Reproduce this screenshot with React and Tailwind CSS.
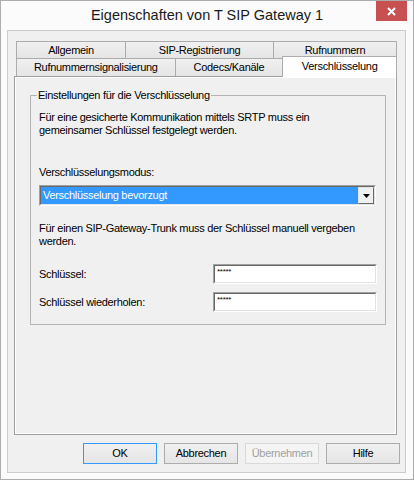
const ui = { fontFamily: '"Liberation Sans", Arial, sans-serif' };

function Tab({ label, width, active }) {
  if (active) {
    return (
      <div
        className={`relative z-10 -mt-[2px] -mb-px flex items-center justify-center border border-b-0 border-[#acacac] bg-white ${width}`}
      >
        <span className="pb-[1px]">{label}</span>
      </div>
    );
  }
  return (
    <div
      className={`-ml-px flex items-center justify-center border border-b-0 border-[#acacac] bg-gradient-to-b from-[#f0f0f0] to-[#e5e5e5] first:ml-0 ${width}`}
    >
      {label}
    </div>
  );
}

// classic sunken 3D edge used by edit boxes and the combo
function Sunken({ className, children }) {
  return (
    <div className={`border border-t-[#a0a0a0] border-l-[#a0a0a0] border-r-white border-b-white ${className}`}>
      <div className="flex h-full border border-t-[#696969] border-l-[#696969] border-r-[#e3e3e3] border-b-[#e3e3e3] bg-white">
        {children}
      </div>
    </div>
  );
}

function Button({ children, primary, disabled }) {
  let cls = 'border-[#acacac] bg-gradient-to-b from-[#f0f0f0] to-[#e5e5e5] text-black';
  if (primary) cls = 'border-[#3399ff] bg-gradient-to-b from-[#f0f0f0] to-[#e5e5e5] text-black';
  if (disabled) cls = 'border-[#d9d9d9] bg-[#f4f4f4] text-[#a0a0a0]';
  return (
    <button className={`flex h-[21px] w-[74px] items-center justify-center border ${cls}`}>
      {children}
    </button>
  );
}

export default function App() {
  return (
    <div
      className="flex h-[480px] w-[414px] flex-col border border-[#adadad] bg-[#fbfbfb] text-[11px] leading-[13px] tracking-[-0.3px] text-black"
      style={ui}
    >
      {/* title bar */}
      <div className="relative flex h-[29px] items-center justify-center">
        <span className="pb-[1px] text-[14.5px] tracking-normal text-[#1a1a1a]">
          Eigenschaften von T SIP Gateway 1
        </span>
        <div className="absolute right-[6px] top-0 flex h-[20px] w-[31px] items-center justify-center bg-[#c75050]">
          <svg width="9" height="9" viewBox="0 0 9 9">
            <path d="M1 1 L8 8 M8 1 L1 8" stroke="#fff" strokeWidth="2" />
          </svg>
        </div>
      </div>

      {/* client area */}
      <div className="ml-[6px] mr-[7px] mb-[6px] flex flex-1 flex-col border border-[#cccccc] bg-[#f0f0f0]">
        <div className="ml-[6px] mt-[10px] w-[383px]">
          {/* tab rows */}
          <div className="ml-[2px] flex h-[17px]">
            <Tab label="Allgemein" width="w-[110px]" />
            <Tab label="SIP-Registrierung" width="w-[149px]" />
            <Tab label="Rufnummern" width="w-[124px]" />
          </div>
          <div className="ml-[2px] flex h-[18px] items-stretch">
            <Tab label="Rufnummernsignalisierung" width="w-[160px]" />
            <Tab label="Codecs/Kanäle" width="w-[109px]" />
            <Tab label="Verschlüsselung" width="w-[115px] -ml-px" active />
          </div>

          {/* tab page */}
          <div className="h-[359px] border border-[#a0a0a0]">
            <div className="h-full border border-white">
              <div className="relative ml-[14px] mt-[17px] w-[356px] border border-[#b4b4b4] px-[8px] pb-[12px] pt-[15px]">
                <span className="absolute -top-[7px] left-[6px] bg-[#f0f0f0] px-[1px]">
                  Einstellungen für die Verschlüsselung
                </span>
                <p>
                  Für eine gesicherte Kommunikation mittels SRTP muss ein
                  <br />
                  gemeinsamer Schlüssel festgelegt werden.
                </p>

                <p className="mt-[29px]">Verschlüsselungsmodus:</p>
                <Sunken className="mt-[6px] h-[21px] w-[337px]">
                  <div className="flex flex-1 items-center bg-[#3399ff] pl-[2px] text-white">
                    Verschlüsselung bevorzugt
                  </div>
                  <div className="flex w-[16px] items-center justify-center border border-t-[#e3e3e3] border-l-[#e3e3e3] border-r-[#696969] border-b-[#696969] bg-[#f0f0f0]">
                    <svg width="7" height="4" viewBox="0 0 7 4">
                      <polygon points="0,0 7,0 3.5,4" fill="#000" />
                    </svg>
                  </div>
                </Sunken>

                <p className="mt-[16px]">
                  Für einen SIP-Gateway-Trunk muss der Schlüssel manuell vergeben
                  <br />
                  werden.
                </p>

                <div className="mt-[16px] flex items-center justify-between">
                  <span>Schlüssel:</span>
                  <Sunken className="h-[20px] w-[164px]">
                    <span className="pl-[2px] pt-[1px] text-[8px] leading-[10px]">*****</span>
                  </Sunken>
                </div>
                <div className="mt-[8px] flex items-center justify-between">
                  <span>Schlüssel wiederholen:</span>
                  <Sunken className="h-[20px] w-[164px]">
                    <span className="pl-[2px] pt-[1px] text-[8px] leading-[10px]">*****</span>
                  </Sunken>
                </div>
              </div>
            </div>
          </div>
        </div>

        {/* dialog buttons */}
        <div className="mr-[5px] mt-[8px] flex justify-end gap-[7px]">
          <Button primary>OK</Button>
          <Button>Abbrechen</Button>
          <Button disabled>Übernehmen</Button>
          <Button>Hilfe</Button>
        </div>
      </div>
    </div>
  );
}
